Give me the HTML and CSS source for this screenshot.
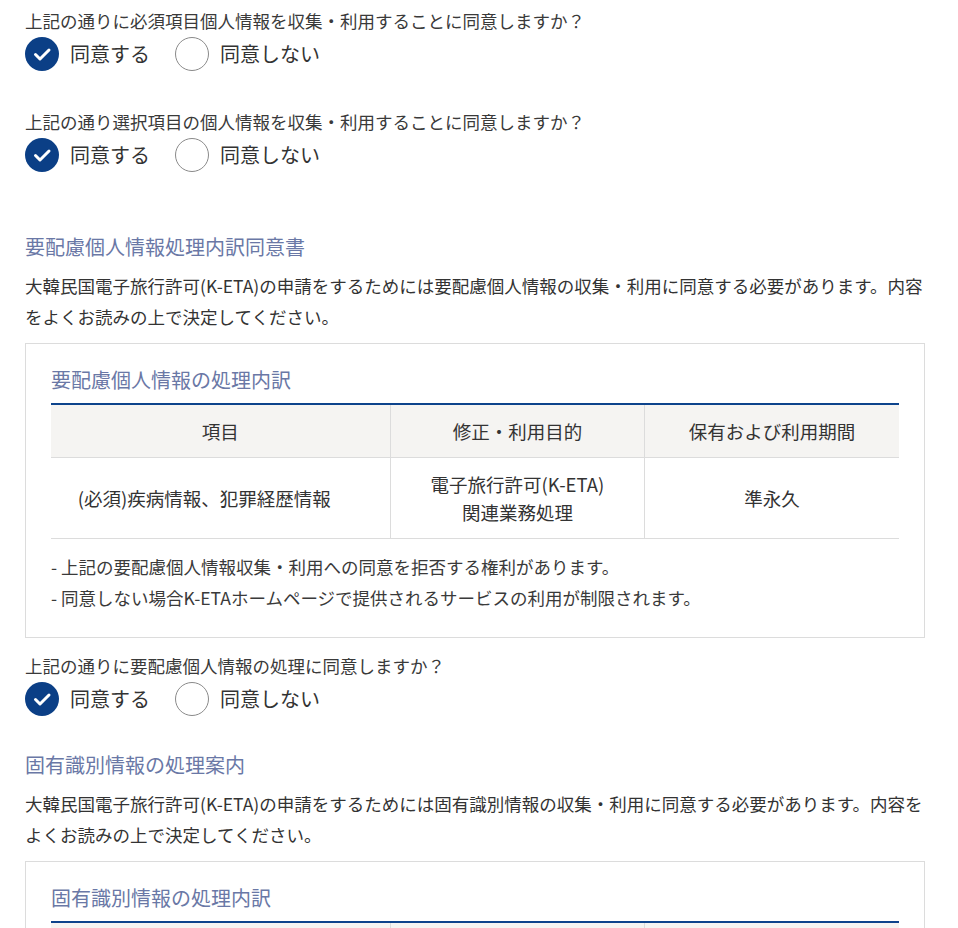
FILE: index.html
```html
<!DOCTYPE html>
<html lang="ja">
<head>
<meta charset="utf-8">
<title>K-ETA 同意</title>
<link rel="stylesheet" href="styles.css">
</head>
<body>
<div class="page">

  <div class="question q-first">
    <p class="q-text">上記の通りに必須項目個人情報を収集・利用することに同意しますか？</p>
    <div class="radios">
      <label class="radio checked"><span class="dot"><svg viewBox="0 0 34 34" width="34" height="34"><polyline points="10.5,17.5 15,22 24,13" fill="none" stroke="#fff" stroke-width="3" stroke-linecap="round" stroke-linejoin="round"/></svg></span>同意する</label>
      <label class="radio"><span class="dot"></span>同意しない</label>
    </div>
  </div>

  <div class="question q-second">
    <p class="q-text">上記の通り選択項目の個人情報を収集・利用することに同意しますか？</p>
    <div class="radios">
      <label class="radio checked"><span class="dot"><svg viewBox="0 0 34 34" width="34" height="34"><polyline points="10.5,17.5 15,22 24,13" fill="none" stroke="#fff" stroke-width="3" stroke-linecap="round" stroke-linejoin="round"/></svg></span>同意する</label>
      <label class="radio"><span class="dot"></span>同意しない</label>
    </div>
  </div>

  <section class="section s-first">
    <h2 class="sec-title">要配慮個人情報処理内訳同意書</h2>
    <p class="sec-desc">大韓民国電子旅行許可(K-ETA)の申請をするためには要配慮個人情報の収集・利用に同意する必要があります。内容をよくお読みの上で決定してください。</p>
    <div class="box">
      <h3 class="box-title">要配慮個人情報の処理内訳</h3>
      <table class="tbl">
        <colgroup><col class="c1"><col class="c2"><col class="c3"></colgroup>
        <thead>
          <tr><th>項目</th><th>修正・利用目的</th><th>保有および利用期間</th></tr>
        </thead>
        <tbody>
          <tr><td class="item">(必須)疾病情報、犯罪経歴情報</td><td>電子旅行許可(K-ETA)<br>関連業務処理</td><td>準永久</td></tr>
        </tbody>
      </table>
      <ul class="notes">
        <li>- 上記の要配慮個人情報収集・利用への同意を拒否する権利があります。</li>
        <li>- 同意しない場合K-ETAホームページで提供されるサービスの利用が制限されます。</li>
      </ul>
    </div>
  </section>

  <div class="question q-third">
    <p class="q-text">上記の通りに要配慮個人情報の処理に同意しますか？</p>
    <div class="radios">
      <label class="radio checked"><span class="dot"><svg viewBox="0 0 34 34" width="34" height="34"><polyline points="10.5,17.5 15,22 24,13" fill="none" stroke="#fff" stroke-width="3" stroke-linecap="round" stroke-linejoin="round"/></svg></span>同意する</label>
      <label class="radio"><span class="dot"></span>同意しない</label>
    </div>
  </div>

  <section class="section s-second">
    <h2 class="sec-title">固有識別情報の処理案内</h2>
    <p class="sec-desc">大韓民国電子旅行許可(K-ETA)の申請をするためには固有識別情報の収集・利用に同意する必要があります。内容をよくお読みの上で決定してください。</p>
    <div class="box">
      <h3 class="box-title">固有識別情報の処理内訳</h3>
      <table class="tbl">
        <colgroup><col class="c1"><col class="c2"><col class="c3"></colgroup>
        <thead>
          <tr><th>項目</th><th>修正・利用目的</th><th>保有および利用期間</th></tr>
        </thead>
        <tbody>
          <tr><td class="item">(必須)旅券番号</td><td>電子旅行許可(K-ETA)<br>関連業務処理</td><td>準永久</td></tr>
        </tbody>
      </table>
    </div>
  </section>

</div>
</body>
</html>
```

FILE: styles.css
```css
html, body {
  margin: 0;
  padding: 0;
  background: #fff;
}

body {
  font-family: "Noto Sans CJK JP", "Noto Sans", sans-serif;
  color: #333;
  overflow: hidden;
}

.page {
  width: 900px;
  padding: 8px 0 0 25px;
}

.question {
  display: flex;
  flex-direction: column;
}

.q-text {
  margin: 0;
  font-size: 17.5px;
  line-height: 26px;
  color: #3a3a3a;
}

.radios {
  display: flex;
  align-items: center;
  gap: 25px;
  margin-top: 3px;
}

.radio {
  display: flex;
  align-items: center;
  gap: 11px;
  font-size: 20px;
  line-height: 34px;
  color: #333;
}

.dot {
  width: 34px;
  height: 34px;
  box-sizing: border-box;
  border-radius: 50%;
  border: 1.5px solid #8a8a8a;
  background: #fff;
  display: flex;
  align-items: center;
  justify-content: center;
}

.radio.checked .dot {
  border: none;
  background: #0b3f86;
}

.q-second {
  margin-top: 38px;
}

.q-third {
  margin-top: 15px;
}

.s-first {
  margin-top: 61px;
}

.s-second {
  margin-top: 35px;
}

.sec-title {
  margin: 0;
  font-size: 20px;
  line-height: 28px;
  font-weight: normal;
  color: #6a78a6;
}

.sec-desc {
  margin: 9px 0 0;
  font-size: 17.5px;
  line-height: 31px;
  color: #333;
}

.box {
  margin-top: 11px;
  border: 1px solid #dcdcdc;
  padding: 22px 25px 24px;
}

.box-title {
  margin: 0;
  font-size: 20px;
  line-height: 28px;
  font-weight: normal;
  color: #6a78a6;
}

.tbl {
  margin-top: 9px;
  width: 100%;
  border-collapse: collapse;
  table-layout: fixed;
  border-top: 2px solid #0d438c;
  font-size: 18.5px;
  line-height: 28px;
  color: #333;
}

.c1 { width: 40%; }
.c2 { width: 30%; }
.c3 { width: 30%; }

.tbl th {
  background: #f5f4f2;
  font-weight: normal;
  padding: 12px 8px;
  border-bottom: 1px solid #dcdcdc;
  text-align: center;
}

.tbl td {
  padding: 12px 8px;
  border-bottom: 1px solid #dcdcdc;
  text-align: center;
}

.tbl td.item {
  padding-right: 40px;
}

.tbl th + th,
.tbl td + td {
  border-left: 1px solid #dcdcdc;
}

.notes {
  list-style: none;
  margin: 12px 0 0;
  padding: 0;
  font-size: 17.5px;
  line-height: 31px;
  color: #3a3a3a;
}
```
